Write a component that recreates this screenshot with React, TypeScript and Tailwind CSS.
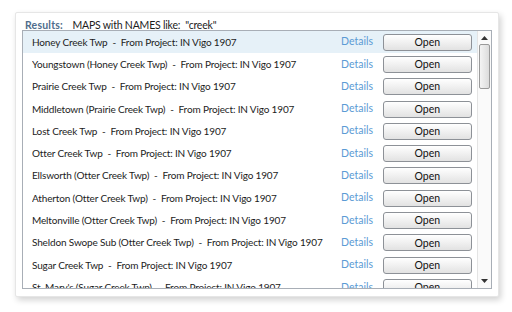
const rows = [
  'Honey Creek Twp',
  'Youngstown (Honey Creek Twp)',
  'Prairie Creek Twp',
  'Middletown (Prairie Creek Twp)',
  'Lost Creek Twp',
  'Otter Creek Twp',
  'Ellsworth (Otter Creek Twp)',
  'Atherton (Otter Creek Twp)',
  'Meltonville (Otter Creek Twp)',
  'Sheldon Swope Sub (Otter Creek Twp)',
  'Sugar Creek Twp',
  "St. Mary's (Sugar Creek Twp)",
];

function ScrollBar() {
  return (
    <div className="flex w-[14px] flex-col items-center border-l border-[#e4e4e4] bg-[#fafafa]">
      <svg width="7" height="4" viewBox="0 0 7 4" className="mt-[5px]">
        <path d="M0 4 L3.5 0 L7 4 Z" fill="#333" />
      </svg>
      <div className="mt-[4px] h-[45px] w-[11px] rounded-[2px] border border-[#9a9a9a] bg-gradient-to-r from-[#f4f4f4] to-[#dcdcdc]" />
      <div className="flex-1" />
      <svg width="7" height="4" viewBox="0 0 7 4" className="mb-[5px]">
        <path d="M0 0 L3.5 4 L7 0 Z" fill="#333" />
      </svg>
    </div>
  );
}

export default function App() {
  return (
    <div className="h-[312px] w-[512px] bg-white pl-[15px] pt-[12px] font-['Lato',sans-serif] text-[10px] text-[#1c1c1c]">
      <div className="flex h-[285px] w-[484px] flex-col rounded-[2px] border border-[#e6e6e6] bg-white px-[6px] pb-[7px] shadow-[2px_3px_6px_rgba(0,0,0,0.18)]">
        <div className="flex h-[17px] items-end pl-[3px] text-[10.5px] leading-none whitespace-pre">
          <span className="font-bold tracking-[0.2px] text-[#4f6d8c]">Results:</span>
          <span className="ml-[2px] tracking-[-0.2px]">{'   MAPS with NAMES like:  "creek"'}</span>
        </div>
        <div className="flex min-h-0 flex-1 overflow-hidden border border-[#a8aeb6]">
          <div className="min-w-0 flex-1 overflow-hidden">
            {rows.map((name, i) => (
              <div
                key={name}
                className={`flex h-[22.3px] shrink-0 items-center pl-[9px] ${i === 0 ? 'bg-[#e6f1f8]' : ''}`}
              >
                <span className="w-[309px] shrink-0 overflow-hidden whitespace-pre tracking-[-0.15px]">{`${name}  -  From Project: IN Vigo 1907`}</span>
                <span className="w-[42px] text-[10.5px] text-[#5b9bd5]">Details</span>
                <button className="mr-[5px] h-[17px] w-[90px] rounded-[3px] border border-[#8d9197] bg-gradient-to-b from-white to-[#e2e2e2] text-[10.5px] leading-none text-[#111]">
                  Open
                </button>
              </div>
            ))}
          </div>
          <ScrollBar />
        </div>
      </div>
    </div>
  );
}
